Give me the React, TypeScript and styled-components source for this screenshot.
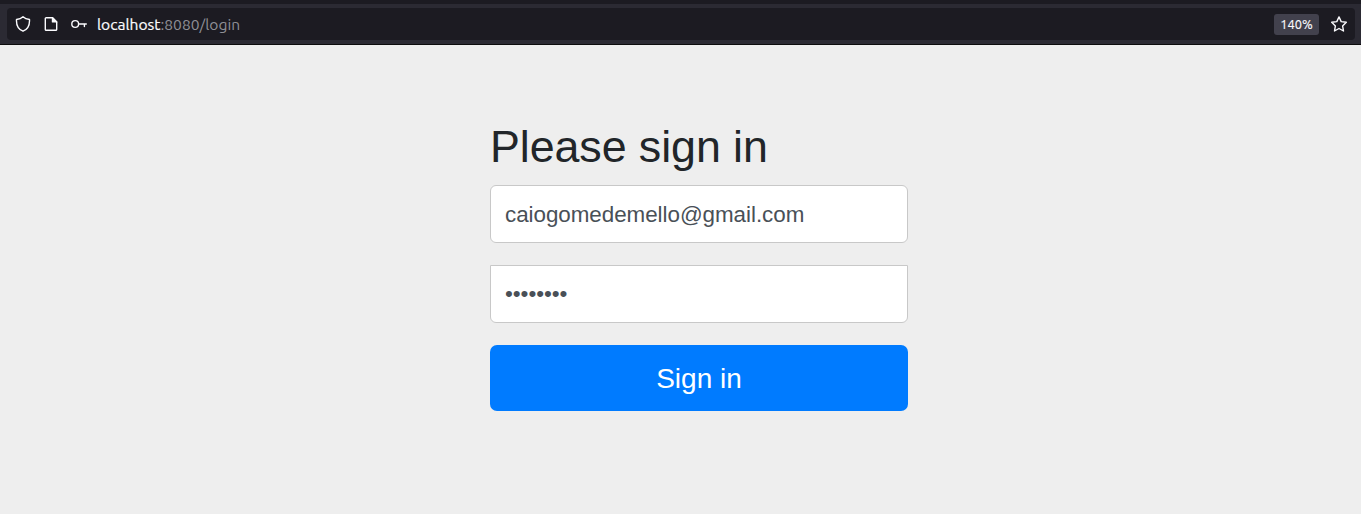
import React from 'react';
import styled, { createGlobalStyle } from 'styled-components';

const GlobalStyle = createGlobalStyle`
  *, *::before, *::after { box-sizing: border-box; }
  body {
    margin: 0;
    background: #eeeeee;
    font-family: "Liberation Sans", Arial, sans-serif;
  }
`;

const Page = styled.div`
  display: flex;
  flex-direction: column;
  height: 514px;
  overflow: hidden;
`;

const Toolbar = styled.header`
  height: 45px;
  padding: 4px 6px 4px 7px;
  border-top: 4px solid #1c1b22;
  border-bottom: 1px solid #0c0c0d;
  background: #2b2a33;
`;

const AddressBar = styled.div`
  display: flex;
  align-items: center;
  height: 32px;
  padding: 0 8px;
  border-radius: 4px;
  background: #1c1b22;
  color: #fbfbfe;
`;

const BarIcon = styled.svg<{ $gap?: number }>`
  flex: none;
  width: 16px;
  height: 16px;
  margin-right: ${({ $gap = 0 }) => $gap}px;
  fill: none;
  stroke: #fbfbfe;
  stroke-width: 1.4;
  stroke-linejoin: round;
  stroke-linecap: round;
`;

const Url = styled.span`
  flex: 1;
  font: 15.6px/20px Ubuntu, "Noto Sans", sans-serif;
  white-space: nowrap;
  color: #8f8f96;
`;

const Host = styled.span`
  color: #fbfbfe;
  -webkit-text-stroke: 0.2px #fbfbfe;
`;

const ZoomBadge = styled.span`
  width: 45px;
  height: 21px;
  margin-right: 12px;
  border-radius: 3px;
  background: #42414d;
  font: 12.8px/21px Ubuntu, "Noto Sans", sans-serif;
  text-align: center;
  -webkit-text-stroke: 0.15px #fbfbfe;
`;

const Form = styled.form`
  display: flex;
  flex-direction: column;
  width: 418px;
  margin: 74px 0 0 490px;
`;

const Title = styled.h2`
  margin: 0 0 12px;
  font-size: 44.8px;
  font-weight: 400;
  line-height: 54px;
  letter-spacing: -0.08px;
  color: #212529;
  white-space: nowrap;
`;

const Field = styled.input<{ $squareTop?: boolean }>`
  width: 100%;
  height: 58px;
  margin: 0 0 22px;
  padding: ${({ $squareTop }) => ($squareTop ? '0 14px' : '2px 14px 0')};
  border: 1px solid #c8c8c8;
  border-radius: ${({ $squareTop }) => ($squareTop ? '0 0 6px 6px' : '6px')};
  background: #fff;
  color: #495057;
  font: 22.4px "Liberation Sans", Arial, sans-serif;
  letter-spacing: -0.04px;
  outline: none;
`;

const SubmitButton = styled.button`
  height: 66px;
  padding: 2px 0 0;
  border: 0;
  border-radius: 7px;
  background: #007bff;
  color: #fff;
  font: 28px/64px "Liberation Sans", Arial, sans-serif;
`;

export default function App() {
  return (
    <Page>
      <GlobalStyle />
      <Toolbar>
        <AddressBar>
          <BarIcon $gap={12} viewBox="0 0 16 16">
            <path d="M8 .8C6.300 2.400 4 3.200 1.500 3.500c-.3 5.200 1.700 9.700 6.500 11.700 4.800-2 6.800-6.500 6.500-11.700C12 3.200 9.700 2.400 8 .8Z" />
          </BarIcon>
          <BarIcon $gap={12} viewBox="0 0 16 16">
            <path d="M9.500 1.700H3.200a.9.9 0 0 0-.9.9v10.800a.9.9 0 0 0 .9.9h9.600a.9.9 0 0 0 .9-.9V5.900Z" />
            <path d="M9.500 1.700v4.200h4.200Z" fill="#fbfbfe" />
          </BarIcon>
          <BarIcon $gap={10} viewBox="0 0 16 16">
            <circle cx="4.200" cy="8" r="3.400" />
            <path d="M7.600 8h7.700M13.400 8v2.500" />
          </BarIcon>
          <Url><Host>localhost</Host>:8080/login</Url>
          <ZoomBadge>140%</ZoomBadge>
          <BarIcon viewBox="0 0 16 16">
            <path d="m8 .9 2.200 4.700 5.100.7-3.700 3.600.9 5.100L8 12.500 3.500 15l.9-5.100L.7 6.300l5.100-.7Z" />
          </BarIcon>
        </AddressBar>
      </Toolbar>
      <Form onSubmit={(event) => event.preventDefault()}>
        <Title>Please sign in</Title>
        <Field type="text" aria-label="Username" defaultValue="caiogomedemello@gmail.com" />
        <Field $squareTop type="password" aria-label="Password" defaultValue="password" />
        <SubmitButton type="submit">Sign in</SubmitButton>
      </Form>
    </Page>
  );
}
